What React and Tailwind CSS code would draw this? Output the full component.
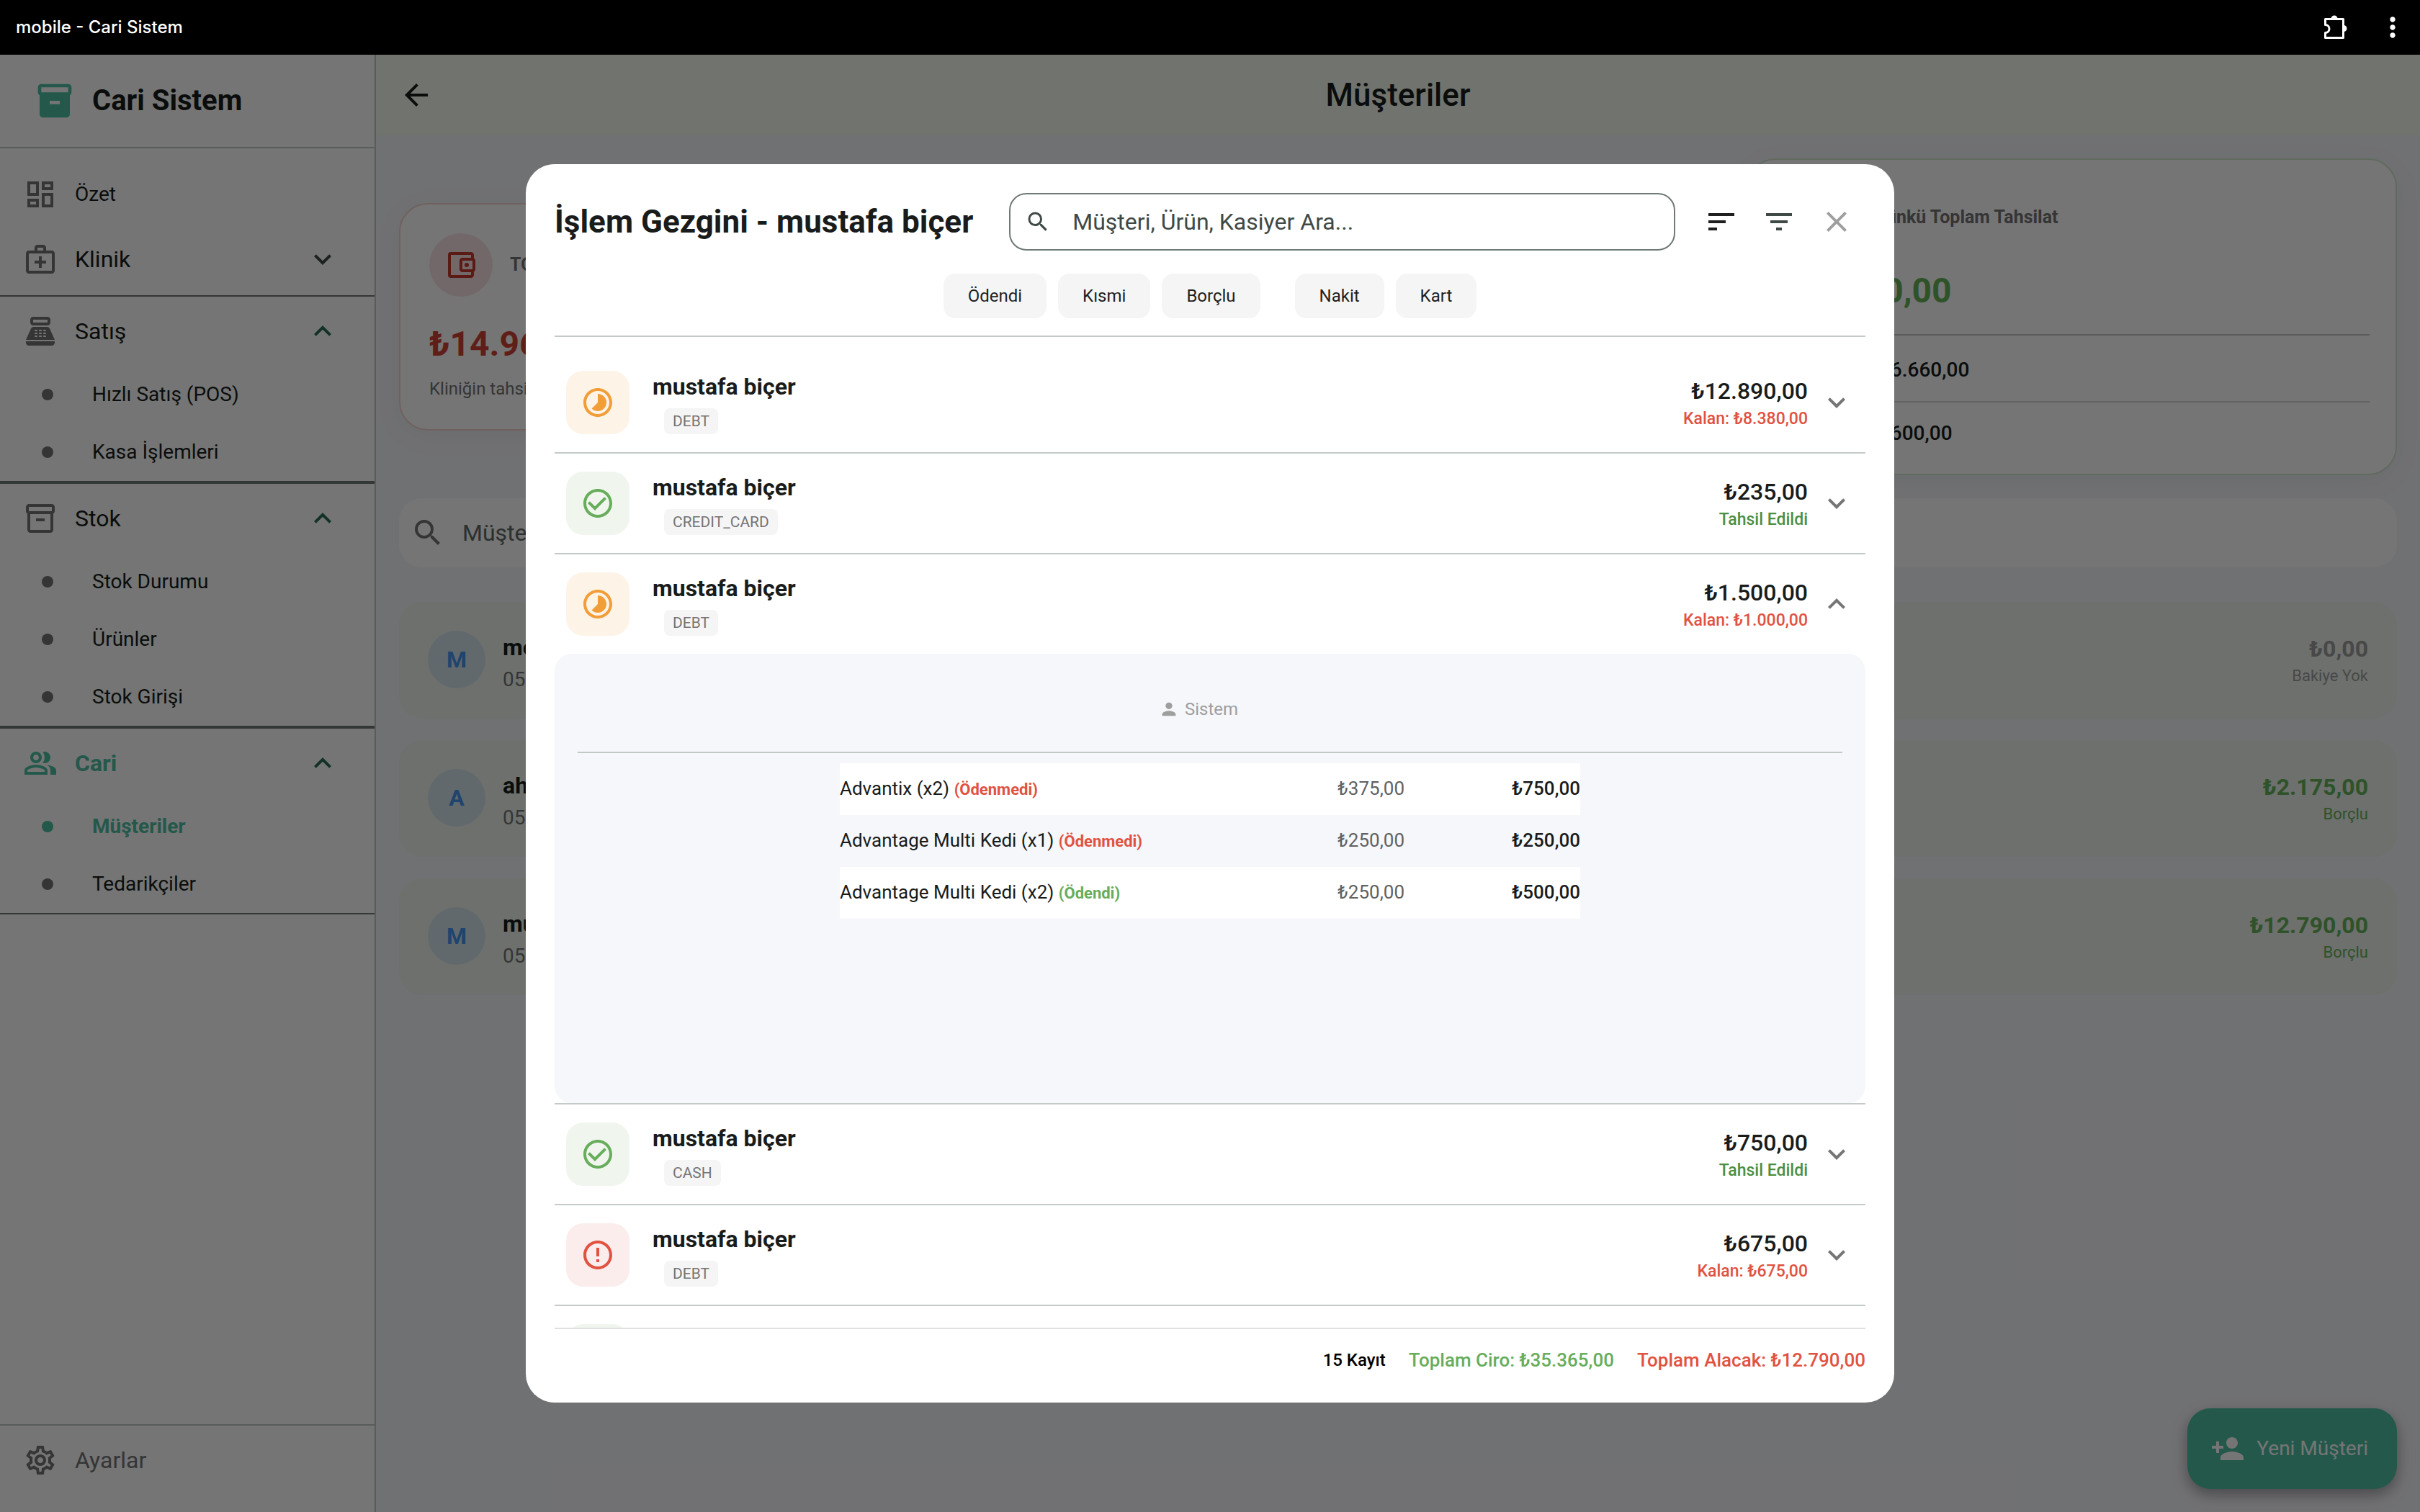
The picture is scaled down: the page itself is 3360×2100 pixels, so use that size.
import { useState } from "react";
import {
  MdArrowBack,
  MdCheckCircleOutline,
  MdClose,
  MdCreditCard,
  MdErrorOutline,
  MdExpandLess,
  MdExpandMore,
  MdFilterList,
  MdInventory2,
  MdMoreVert,
  MdOutlineAccountBalanceWallet,
  MdOutlineDashboard,
  MdOutlineInventory2,
  MdOutlineMedicalServices,
  MdOutlinePeopleAlt,
  MdOutlineSettings,
  MdPayments,
  MdPerson,
  MdPersonAdd,
  MdPointOfSale,
  MdSearch,
  MdSort,
  MdTimelapse,
  MdTrendingUp,
} from "react-icons/md";

const menu = [
  { label: "Klinik", icon: MdOutlineMedicalServices, open: false, items: [] },
  {
    label: "Satış",
    icon: MdPointOfSale,
    open: true,
    items: ["Hızlı Satış (POS)", "Kasa İşlemleri"],
  },
  {
    label: "Stok",
    icon: MdOutlineInventory2,
    open: true,
    items: ["Stok Durumu", "Ürünler", "Stok Girişi"],
  },
  {
    label: "Cari",
    icon: MdOutlinePeopleAlt,
    open: true,
    active: true,
    items: ["Müşteriler", "Tedarikçiler"],
  },
];

const customers = [
  { name: "mehmet", phone: "0555", amount: "₺0,00", status: "Bakiye Yok" },
  { name: "ahmet", phone: "0555", amount: "₺2.175,00", status: "Borçlu" },
  { name: "mustafa", phone: "0555", amount: "₺12.790,00", status: "Borçlu" },
];

const transactions = [
  { id: 1, type: "partial", method: "DEBT", total: "₺12.890,00", rest: "₺8.380,00" },
  { id: 2, type: "paid", method: "CREDIT_CARD", total: "₺235,00" },
  {
    id: 3,
    type: "partial",
    method: "DEBT",
    total: "₺1.500,00",
    rest: "₺1.000,00",
    lines: [
      { product: "Advantix (x2)", paid: false, price: "₺375,00", sum: "₺750,00" },
      { product: "Advantage Multi Kedi (x1)", paid: false, price: "₺250,00", sum: "₺250,00" },
      { product: "Advantage Multi Kedi (x2)", paid: true, price: "₺250,00", sum: "₺500,00" },
    ],
  },
  { id: 4, type: "paid", method: "CASH", total: "₺750,00" },
  { id: 5, type: "debt", method: "DEBT", total: "₺675,00", rest: "₺675,00" },
  { id: 6, type: "paid", method: "CASH", total: "₺450,00" },
];

const types = {
  partial: { icon: MdTimelapse, className: "bg-[#fdf3e7] text-[#f19e38]" },
  paid: { icon: MdCheckCircleOutline, className: "bg-[#f0f6ee] text-[#67ad5b]" },
  debt: { icon: MdErrorOutline, className: "bg-[#faedec] text-[#e15241]" },
};

function PuzzleIcon() {
  return (
    <svg viewBox="0 0 34 34" className="size-[34px]" fill="none">
      <path
        d="M2.500 5.500h25v26h-25v-7a5.500 5.500 0 0 0 0-11z"
        stroke="currentColor"
        strokeWidth="3"
        strokeLinejoin="round"
      />
      <path d="M10.500 5a4.500 4.500 0 0 1 9 0zM28 14a4.500 4.500 0 0 1 0 9z" fill="currentColor" />
    </svg>
  );
}

function TitleBar() {
  return (
    <header className="flex h-[76px] shrink-0 items-center justify-between bg-black pl-[22px] pr-4 text-white">
      <span className="font-['Inter',sans-serif] text-[24px] font-medium">mobile - Cari Sistem</span>
      <div className="flex items-center gap-10">
        <button aria-label="Uzantılar">
          <PuzzleIcon />
        </button>
        <button aria-label="Menü">
          <MdMoreVert className="size-11" />
        </button>
      </div>
    </header>
  );
}

function MenuGroup({ group }) {
  const [open, setOpen] = useState(group.open);
  const Icon = group.icon;
  const Chevron = open ? MdExpandLess : MdExpandMore;

  return (
    <div className={`border-y-2 ${open ? "border-[#6f7975]" : "border-transparent"}`}>
      <button
        onClick={() => setOpen(!open)}
        className={`flex h-24 w-full items-center pl-8 pr-12 text-[32px] ${
          group.active ? "font-bold text-[#4ec1a3]" : "text-[#161d1b]"
        }`}
      >
        <Icon className={`mr-6 size-12 ${group.active ? "" : "text-[#757575]"}`} />
        {group.label}
        <Chevron className={`ml-auto size-12 ${open ? "text-[#2a6b58]" : "text-[#3f4946]"}`} />
      </button>
      {open &&
        group.items.map((item) => {
          const selected = item === "Müşteriler";
          return (
            <a
              key={item}
              href="#"
              className={`flex h-20 items-center gap-[54px] pl-[58px] text-[28px] ${
                selected ? "font-bold text-[#4ec1a3]" : "text-[#161d1b]"
              }`}
            >
              <span className={`size-4 rounded-full ${selected ? "bg-[#4ec1a3]" : "bg-[#757575]"}`} />
              {item}
            </a>
          );
        })}
    </div>
  );
}

function Sidebar() {
  return (
    <aside className="flex w-[522px] shrink-0 flex-col border-r-2 border-[#bfc9c5] bg-white">
      <div className="flex h-[130px] items-center gap-6 border-b-2 border-[#bfc9c5] pl-12">
        <MdInventory2 className="size-14 text-[#4ec1a3]" />
        <span className="text-[40px] font-bold text-[#161d1b]">Cari Sistem</span>
      </div>
      <nav className="flex-1 pt-6">
        <a href="#" className="flex h-20 items-center gap-6 pl-8 text-[28px] text-[#161d1b]">
          <MdOutlineDashboard className="size-12 text-[#757575]" />
          Özet
        </a>
        {menu.map((group) => (
          <MenuGroup key={group.label} group={group} />
        ))}
      </nav>
      <div className="border-t-2 border-[#bfc9c5] pb-6">
        <a href="#" className="flex h-24 items-center gap-6 pl-8 text-[32px] text-[#757575]">
          <MdOutlineSettings className="size-12" />
          Ayarlar
        </a>
      </div>
    </aside>
  );
}

function SummaryCards() {
  return (
    <div className="grid grid-cols-3 items-center gap-8">
      <section className="rounded-[40px] border-2 border-[#f3d3d0] bg-white p-10 shadow-[0_8px_40px_rgba(0,0,0,0.05)]">
        <div className="flex items-center gap-6">
          <span className="rounded-full bg-[#fbe3e4] p-5">
            <MdOutlineAccountBalanceWallet className="size-12 text-[#c6392d]" />
          </span>
          <h2 className="text-[25px] font-bold text-[#757575]">TOPLAM ALACAK</h2>
        </div>
        <p className="mt-8 text-[48px] leading-[68px] font-bold text-[#d04336]">₺14.965,00</p>
        <p className="mt-3 text-[24px] leading-8 text-[#757575]">Kliniğin tahsil edeceği</p>
      </section>

      <section className="col-start-3 rounded-[40px] border-2 border-[#d3e6d0] bg-white p-9 shadow-[0_8px_40px_rgba(0,0,0,0.05)]">
        <div className="flex items-center gap-6">
          <span className="rounded-full bg-[#e8f5e9] p-5">
            <MdTrendingUp className="size-12 text-[#67ad5b]" />
          </span>
          <h2 className="text-[25px] font-bold text-[#757575]">Bugünkü Toplam Tahsilat</h2>
        </div>
        <p className="mt-6 text-[48px] leading-[68px] font-bold text-[#67b35b]">₺17.260,00</p>
        <div className="mt-[26px] border-t-2 border-[#c6c6c6] pt-7 text-[28px] leading-10 text-[#161d1b]">
          <div className="flex items-center gap-3">
            <MdPayments className="size-9 text-[#757575]" />
            <span className="w-[86px]">Nakit</span>
            <span className="font-medium">₺6.660,00</span>
          </div>
          <div className="mt-[23px] flex items-center gap-3 border-t-2 border-[#d8d8d8] pt-[23px]">
            <MdCreditCard className="size-9 text-[#757575]" />
            <span className="w-[86px]">Kart</span>
            <span className="font-medium">₺600,00</span>
          </div>
        </div>
      </section>
    </div>
  );
}

function CustomerRow({ customer }) {
  const debtor = customer.status === "Borçlu";
  return (
    <li className="flex items-start rounded-[32px] bg-[#edf4ee] px-10 pt-10 pb-8">
      <span className="flex size-20 items-center justify-center rounded-full bg-[#d5e4ec] text-[32px] font-bold text-[#4494f0]">
        {customer.name[0].toUpperCase()}
      </span>
      <div className="ml-6">
        <p className="text-[32px] leading-[46px] font-bold text-[#161d1b]">{customer.name}</p>
        <p className="text-[28px] leading-[44px] text-[#757575]">{customer.phone}</p>
      </div>
      <div className={`mt-1 ml-auto text-right ${debtor ? "text-[#67b35b]" : "text-[#9e9e9e]"}`}>
        <p className="text-[32px] leading-[42px] font-bold">{customer.amount}</p>
        <p className="text-[22px] leading-[34px]">{customer.status}</p>
      </div>
    </li>
  );
}

function CustomersPage() {
  return (
    <main className="relative flex min-w-0 flex-1 flex-col bg-[#f5f6fa]">
      <div className="flex h-28 shrink-0 items-center bg-[#f4faf0] px-8">
        <button aria-label="Geri" className="text-[#161d1b]">
          <MdArrowBack className="size-12" />
        </button>
        <h1 className="flex-1 pr-12 text-center text-[44px] font-medium text-[#161d1b]">Müşteriler</h1>
      </div>
      <div className="p-8">
        <SummaryCards />
        <label className="mt-8 flex h-24 items-center gap-6 rounded-[32px] bg-white px-4">
          <MdSearch className="size-12 shrink-0 text-[#757575]" />
          <input
            type="search"
            aria-label="Müşteri ara"
            placeholder="Müşteri Ara..."
            className="w-full bg-transparent text-[32px] outline-none placeholder:text-[#5f6966]"
          />
        </label>
        <ul className="mt-12 flex flex-col gap-[30px]">
          {customers.map((c) => (
            <CustomerRow key={c.name} customer={c} />
          ))}
        </ul>
      </div>
      <button className="absolute right-8 bottom-8 flex h-28 items-center gap-4 rounded-[32px] bg-[#4ec1a3] pr-10 pl-8 text-[28px] text-white shadow-[0_8px_20px_rgba(0,0,0,0.35)]">
        <MdPersonAdd className="size-12" />
        Yeni Müşteri
      </button>
    </main>
  );
}

function FilterChip({ children }) {
  return (
    <button className="h-[62px] rounded-2xl bg-[#f5f5f5] px-[34px] text-[24px] text-[#1f1f1f]">
      {children}
    </button>
  );
}

function TransactionDetails({ lines }) {
  return (
    <div className="min-h-[624px] rounded-3xl bg-[#f5f7fb] px-8 pt-8">
      <div className="flex h-[90px] items-center justify-center gap-2 pr-8 text-[24px] text-[#9e9e9e]">
        <MdPerson className="size-7" />
        Sistem
      </div>
      <hr className="my-3.5 border-t-2 border-[#c0c9c6]" />
      <table className="mx-auto w-[1028px] text-[26px] text-[#191c1b]">
        <tbody>
          {lines.map((line) => (
            <tr key={line.product} className="h-[72px] odd:bg-white">
              <td>
                {line.product}{" "}
                <span className={`text-[22px] font-bold ${line.paid ? "text-[#67ad5b]" : "text-[#e15241]"}`}>
                  {line.paid ? "(Ödendi)" : "(Ödenmedi)"}
                </span>
              </td>
              <td className="w-[244px] text-right text-[#616161]">{line.price}</td>
              <td className="w-[244px] text-right font-medium">{line.sum}</td>
            </tr>
          ))}
        </tbody>
      </table>
    </div>
  );
}

function TransactionRow({ item }) {
  const [open, setOpen] = useState(Boolean(item.lines));
  const { icon: Icon, className } = types[item.type];
  const Chevron = open ? MdExpandLess : MdExpandMore;

  return (
    <li className="border-b-2 border-[#c3cbc8]">
      <button onClick={() => setOpen(!open)} className="flex h-[138px] w-full items-center px-4 text-left">
        <span className={`flex size-[88px] items-center justify-center rounded-3xl ${className}`}>
          <Icon className="size-12" />
        </span>
        <span className="ml-8 flex flex-col items-start gap-2">
          <span className="text-[32px] leading-[44px] font-bold text-[#191c1b]">mustafa biçer</span>
          <span className="ml-4 rounded-lg bg-[#f5f5f5] px-3 text-[21px] leading-9 text-[#757575]">
            {item.method}
          </span>
        </span>
        <span className="ml-auto flex flex-col text-right">
          <span className="text-[32px] leading-[46px] font-medium text-[#191c1b]">{item.total}</span>
          {item.rest ? (
            <span className="text-[23px] leading-8 font-medium text-[#e15241]">Kalan: {item.rest}</span>
          ) : (
            <span className="text-[23px] leading-8 font-medium text-[#4b8f43]">Tahsil Edildi</span>
          )}
        </span>
        <Chevron className="ml-4 size-12 text-[#757575]" />
      </button>
      {open && item.lines && <TransactionDetails lines={item.lines} />}
    </li>
  );
}

function TransactionDialog() {
  return (
    <div
      role="dialog"
      aria-modal="true"
      aria-labelledby="dialog-title"
      className="flex h-[85%] w-full max-w-[1900px] flex-col rounded-[40px] bg-white p-10"
    >
      <div className="flex items-center">
        <h2 id="dialog-title" className="text-[44px] font-bold whitespace-nowrap text-[#191c1b]">
          İşlem Gezgini - mustafa biçer
        </h2>
        <label className="mr-6 ml-[50px] flex h-20 flex-1 items-center gap-[30px] rounded-3xl border-2 border-[#6f7976] px-5">
          <MdSearch className="size-9 shrink-0 text-[#3f4946]" />
          <input
            type="search"
            aria-label="İşlem ara"
            placeholder="Müşteri, Ürün, Kasiyer Ara..."
            className="w-full text-[32px] outline-none placeholder:text-[#3f4946]"
          />
        </label>
        <button aria-label="Sırala" className="flex size-20 items-center justify-center text-[#1f1f1f]">
          <MdSort className="size-12" />
        </button>
        <button aria-label="Filtrele" className="flex size-20 items-center justify-center text-[#3f4946]">
          <MdFilterList className="size-12" />
        </button>
        <button aria-label="Kapat" className="flex size-20 items-center justify-center text-[#9e9e9e]">
          <MdClose className="size-12" />
        </button>
      </div>

      <div className="mt-8 flex justify-center gap-12">
        <div className="flex gap-4">
          <FilterChip>Ödendi</FilterChip>
          <FilterChip>Kısmi</FilterChip>
          <FilterChip>Borçlu</FilterChip>
        </div>
        <div className="flex gap-4">
          <FilterChip>Nakit</FilterChip>
          <FilterChip>Kart</FilterChip>
        </div>
      </div>

      <ul className="mt-6 min-h-0 flex-1 overflow-hidden border-t-2 border-[#c3cbc8] pt-[22px]">
        {transactions.map((item) => (
          <TransactionRow key={item.id} item={item} />
        ))}
      </ul>

      <div className="flex justify-end gap-8 border-t-2 border-[#e0e0e0] pt-6 text-[26px] leading-[38px] font-medium">
        <span className="text-[24px] text-black">15 Kayıt</span>
        <span className="text-[#67ad5b]">Toplam Ciro: ₺35.365,00</span>
        <span className="text-[#e15241]">Toplam Alacak: ₺12.790,00</span>
      </div>
    </div>
  );
}

export default function App() {
  return (
    <div className="flex h-screen flex-col overflow-hidden font-['Roboto',sans-serif]">
      <TitleBar />
      <div className="relative flex min-h-0 flex-1">
        <Sidebar />
        <CustomersPage />
        {/* Karartma + işlem penceresi */}
        <div className="absolute inset-0 flex items-center justify-center bg-black/54">
          <TransactionDialog />
        </div>
      </div>
    </div>
  );
}
